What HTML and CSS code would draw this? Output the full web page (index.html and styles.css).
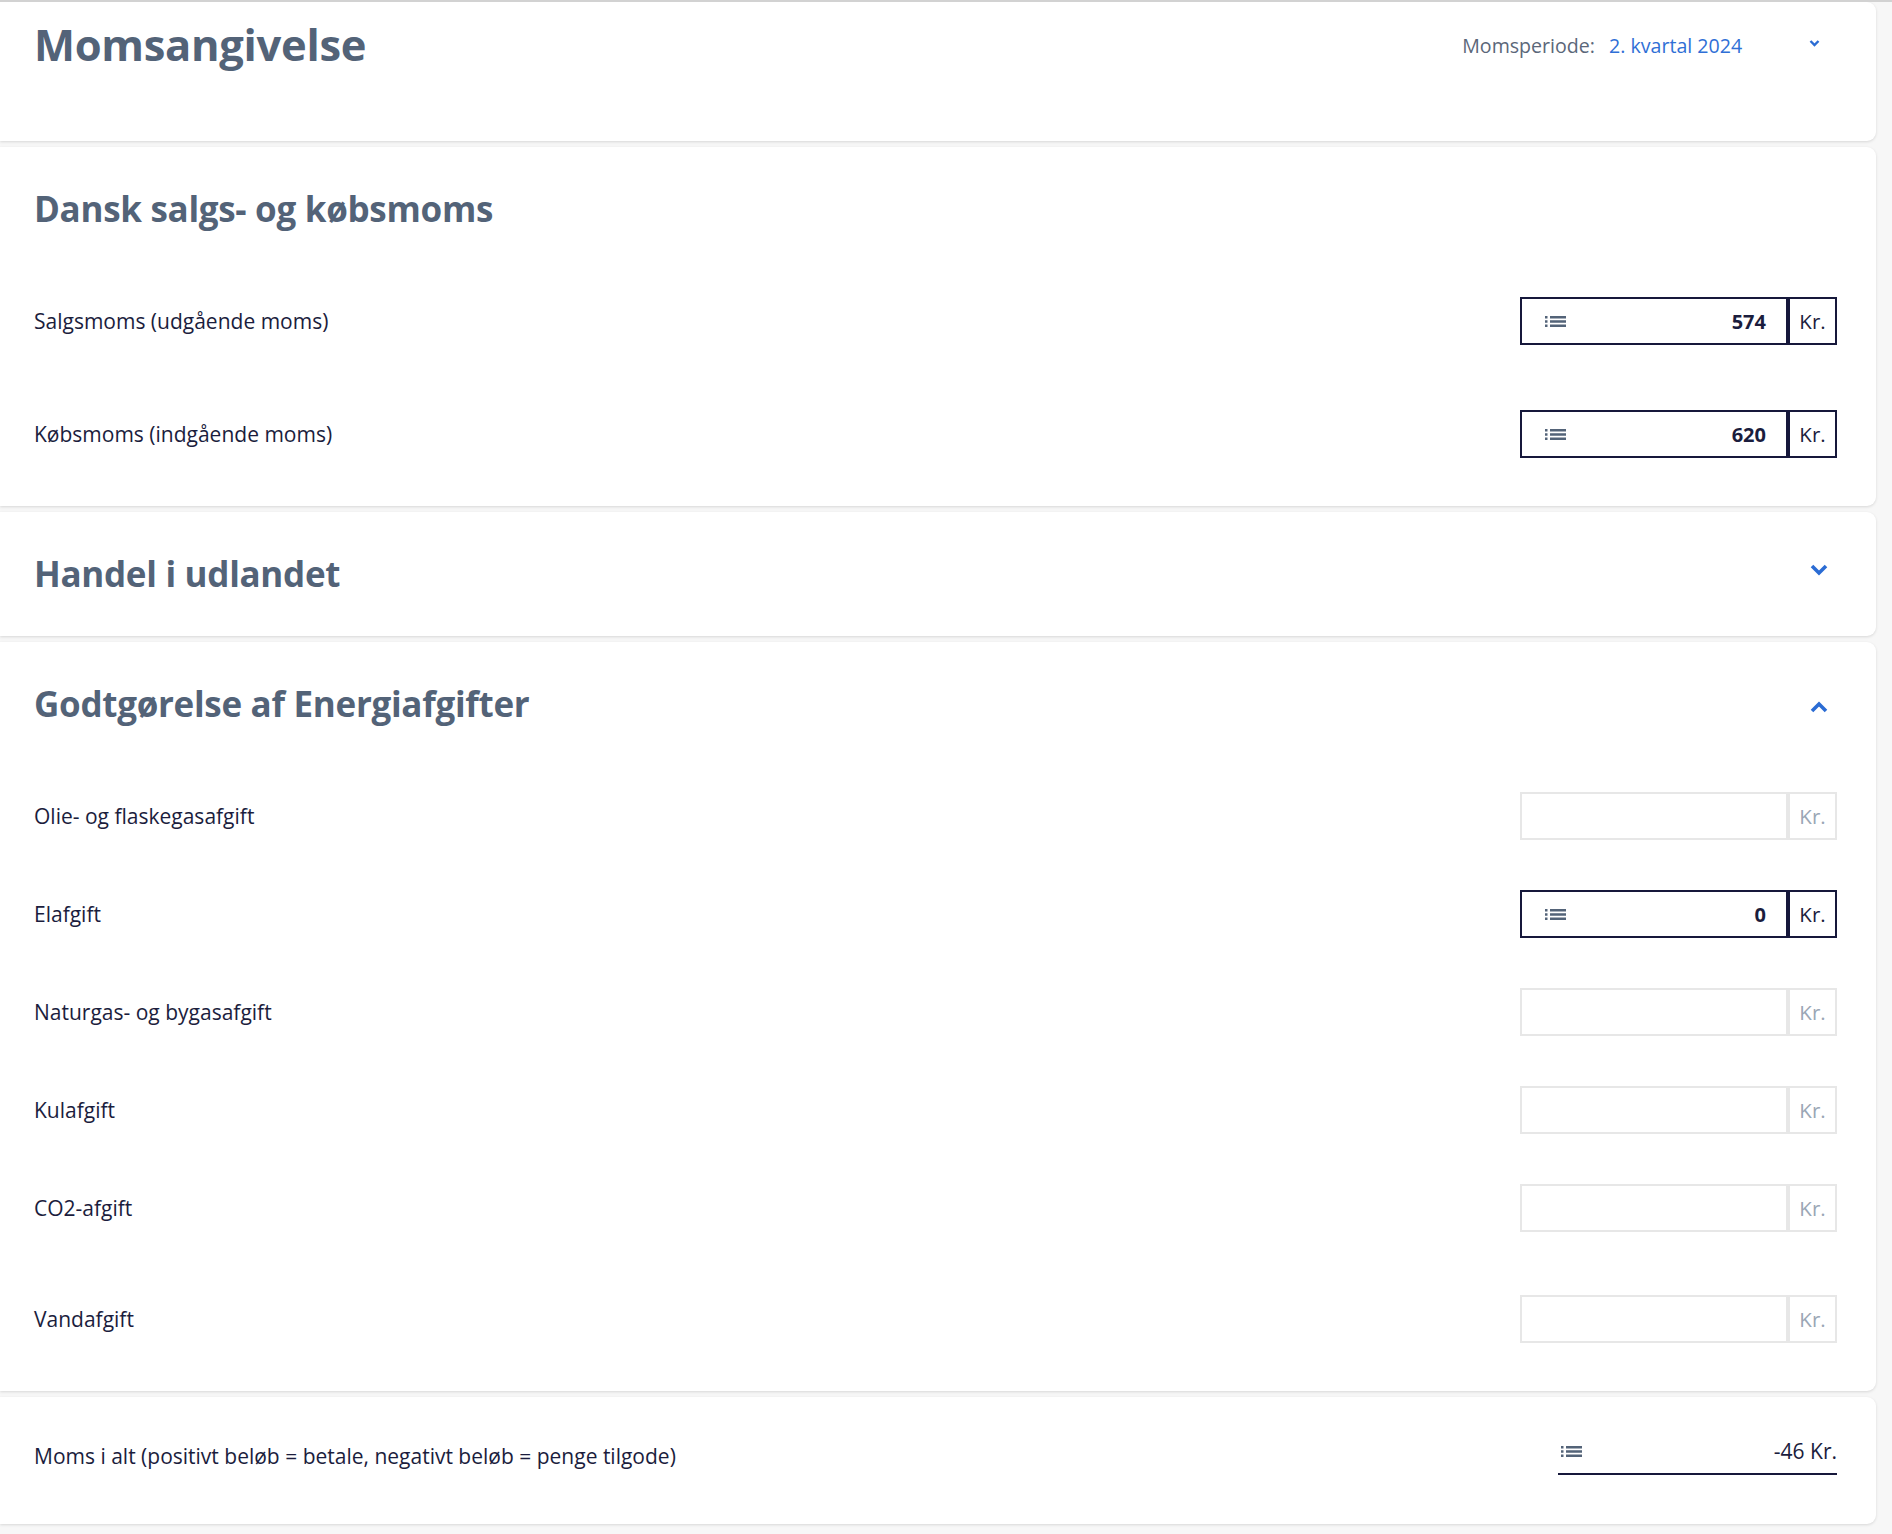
FILE: index.html
```html
<!DOCTYPE html>
<html lang="da">
<head>
    <meta charset="UTF-8">
    <meta name="viewport" content="width=device-width, initial-scale=1.0">
    <title>Momsangivelse</title>
    <link rel="stylesheet" href="styles.css">
</head>
<body>

    <div class="page">

        <header class="card card-head">
            <h1 class="page-title">Momsangivelse</h1>
            <div class="period">
                <span class="period-label">Momsperiode:</span>
                <span class="period-value">2. kvartal 2024</span>
                <svg class="period-caret" width="11" height="8" viewBox="0 0 11 8"><polyline points="1.5,2 5.5,6 9.5,2" fill="none" stroke="#2b6cd4" stroke-width="2.4"/></svg>
            </div>
        </header>

        <section class="card">
            <h2 class="card-title">Dansk salgs- og købsmoms</h2>

            <div class="field-row first">
                <span class="field-label">Salgsmoms (udgående moms)</span>
                <div class="amount">
                    <div class="amount-input">
                        <svg class="list-icon" width="21" height="11" viewBox="0 0 21 11"><rect x="0" y="0" width="2.5" height="2.5"/><rect x="0" y="4.25" width="2.5" height="2.5"/><rect x="0" y="8.5" width="2.5" height="2.5"/><rect x="5" y="0" width="16" height="2.5"/><rect x="5" y="4.25" width="16" height="2.5"/><rect x="5" y="8.5" width="16" height="2.5"/></svg>
                        <span class="amount-value">574</span>
                    </div>
                    <div class="amount-unit">Kr.</div>
                </div>
            </div>

            <div class="field-row wide">
                <span class="field-label">Købsmoms (indgående moms)</span>
                <div class="amount">
                    <div class="amount-input">
                        <svg class="list-icon" width="21" height="11" viewBox="0 0 21 11"><rect x="0" y="0" width="2.5" height="2.5"/><rect x="0" y="4.25" width="2.5" height="2.5"/><rect x="0" y="8.5" width="2.5" height="2.5"/><rect x="5" y="0" width="16" height="2.5"/><rect x="5" y="4.25" width="16" height="2.5"/><rect x="5" y="8.5" width="16" height="2.5"/></svg>
                        <span class="amount-value">620</span>
                    </div>
                    <div class="amount-unit">Kr.</div>
                </div>
            </div>
        </section>

        <section class="card card-collapsed">
            <div class="card-top">
                <h2 class="card-title">Handel i udlandet</h2>
                <svg class="toggle down" width="18" height="13" viewBox="0 0 18 13"><polyline points="2,3 9,10 16,3" fill="none" stroke="#2b6cd4" stroke-width="3.6"/></svg>
            </div>
        </section>

        <section class="card">
            <div class="card-top">
                <h2 class="card-title">Godtgørelse af Energiafgifter</h2>
                <svg class="toggle up" width="18" height="13" viewBox="0 0 18 13"><polyline points="2,10 9,3 16,10" fill="none" stroke="#2b6cd4" stroke-width="3.6"/></svg>
            </div>

            <div class="field-row first">
                <span class="field-label">Olie- og flaskegasafgift</span>
                <div class="amount empty">
                    <div class="amount-input"></div>
                    <div class="amount-unit">Kr.</div>
                </div>
            </div>

            <div class="field-row">
                <span class="field-label">Elafgift</span>
                <div class="amount">
                    <div class="amount-input">
                        <svg class="list-icon" width="21" height="11" viewBox="0 0 21 11"><rect x="0" y="0" width="2.5" height="2.5"/><rect x="0" y="4.25" width="2.5" height="2.5"/><rect x="0" y="8.5" width="2.5" height="2.5"/><rect x="5" y="0" width="16" height="2.5"/><rect x="5" y="4.25" width="16" height="2.5"/><rect x="5" y="8.5" width="16" height="2.5"/></svg>
                        <span class="amount-value">0</span>
                    </div>
                    <div class="amount-unit">Kr.</div>
                </div>
            </div>

            <div class="field-row">
                <span class="field-label">Naturgas- og bygasafgift</span>
                <div class="amount empty">
                    <div class="amount-input"></div>
                    <div class="amount-unit">Kr.</div>
                </div>
            </div>

            <div class="field-row">
                <span class="field-label">Kulafgift</span>
                <div class="amount empty">
                    <div class="amount-input"></div>
                    <div class="amount-unit">Kr.</div>
                </div>
            </div>

            <div class="field-row">
                <span class="field-label">CO2-afgift</span>
                <div class="amount empty">
                    <div class="amount-input"></div>
                    <div class="amount-unit">Kr.</div>
                </div>
            </div>

            <div class="field-row last">
                <span class="field-label">Vandafgift</span>
                <div class="amount empty">
                    <div class="amount-input"></div>
                    <div class="amount-unit">Kr.</div>
                </div>
            </div>
        </section>

        <section class="card card-total">
            <div class="total-row">
                <span class="field-label">Moms i alt (positivt beløb = betale, negativt beløb = penge tilgode)</span>
                <div class="total">
                    <svg class="list-icon" width="21" height="11" viewBox="0 0 21 11"><rect x="0" y="0" width="2.5" height="2.5"/><rect x="0" y="4.25" width="2.5" height="2.5"/><rect x="0" y="8.5" width="2.5" height="2.5"/><rect x="5" y="0" width="16" height="2.5"/><rect x="5" y="4.25" width="16" height="2.5"/><rect x="5" y="8.5" width="16" height="2.5"/></svg>
                    <span class="total-value">-46 Kr.</span>
                </div>
            </div>
        </section>

    </div>

</body>
</html>
```

FILE: styles.css
```css
body {
    margin: 0;
    background: #f7f7f7;
    font-family: "Open Sans", "Noto Sans", sans-serif;
    color: #1b1d3d;
    border-top: 2px solid #d2d2d2;
}
.page {
    width: 1876px;
    display: flex;
    flex-direction: column;
    gap: 6px;
    padding-bottom: 10px;
}
.card {
    background: #fff;
    border-radius: 0 9px 9px 0;
    box-shadow: 0 1px 3px rgba(0, 0, 0, 0.13);
    padding: 40px 39px 48px 34px;
}

/* header */
.card-head {
    height: 139px;
    box-sizing: border-box;
    padding: 15px 56px 0 34px;
    display: flex;
    justify-content: space-between;
    align-items: flex-start;
}
.page-title {
    margin: 0;
    font-size: 43.5px;
    line-height: 56px;
    font-weight: 700;
    color: #536378;
    letter-spacing: -0.3px;
}
.period {
    display: flex;
    align-items: center;
    height: 56px;
    font-size: 19.6px;
}
.period-label {
    color: #5b6779;
    margin-right: 14px;
}
.period-value {
    color: #2f6fd6;
    width: 200px;
}
.period-caret {
    margin-top: -4px;
}

/* sections */
.card-title {
    margin: 0;
    font-size: 35px;
    line-height: 44px;
    font-weight: 700;
    color: #536378;
    letter-spacing: -0.3px;
}
.card-top {
    display: flex;
    justify-content: space-between;
    align-items: center;
}
.card-collapsed {
    padding-bottom: 40px;
}
.toggle {
    margin-right: 9px;
}
.toggle.down {
    margin-top: -10px;
}
.toggle.up {
    margin-top: 6px;
}

.field-row {
    display: flex;
    justify-content: space-between;
    align-items: center;
    margin-top: 50px;
}
.field-row.first {
    margin-top: 66px;
}
.field-row.wide {
    margin-top: 65px;
}
.field-row.last {
    margin-top: 63px;
}
.field-label {
    font-size: 21px;
}

/* amount box */
.amount {
    display: flex;
    height: 48px;
}
.amount-input {
    width: 268px;
    box-sizing: border-box;
    border: 2px solid #16183b;
    display: flex;
    align-items: center;
    justify-content: space-between;
    padding: 0 20px 0 23px;
}
.amount-value {
    font-weight: 700;
    font-size: 20px;
}
.amount-unit {
    width: 49px;
    box-sizing: border-box;
    border: 2px solid #16183b;
    display: flex;
    align-items: center;
    justify-content: center;
    font-size: 20.5px;
}
.amount.empty .amount-input,
.amount.empty .amount-unit {
    border-color: #e7e7e7;
}
.amount.empty .amount-unit {
    color: #9aa6b5;
}
.list-icon {
    fill: #536378;
}

/* total */
.card-total {
    padding-top: 40px;
    padding-bottom: 49px;
}
.total-row {
    display: flex;
    justify-content: space-between;
    align-items: center;
}
.total {
    width: 279px;
    box-sizing: border-box;
    display: flex;
    align-items: center;
    justify-content: space-between;
    padding: 0 0 8px 3px;
    border-bottom: 2px solid #16183b;
}
.total-value {
    font-size: 21px;
    line-height: 28px;
}
```
